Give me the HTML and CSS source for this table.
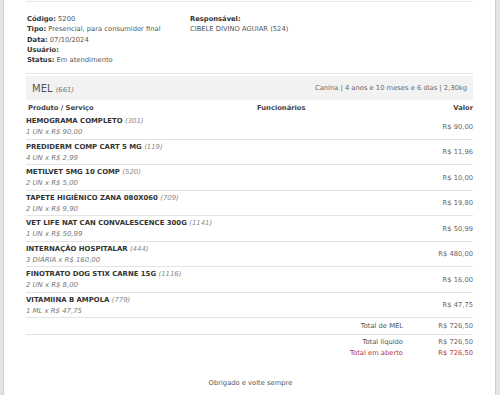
FILE: index.html
```html
<!DOCTYPE html>
<html lang="pt-BR">
<head>
<meta charset="utf-8">
<title>Atendimento 5200</title>
<link rel="stylesheet" href="styles.css">
</head>
<body>
<div class="sheet">
  <div class="content">
    <div class="topline"></div>
    <div class="info">
      <div class="info-col left">
        <div><b>Código:</b> 5200</div>
        <div><b>Tipo:</b> Presencial, para consumidor final</div>
        <div><b>Data:</b> 07/10/2024</div>
        <div><b>Usuário:</b></div>
        <div><b>Status:</b> Em atendimento</div>
      </div>
      <div class="info-col right">
        <div><b>Responsável:</b></div>
        <div>CIBELE DIVINO AGUIAR (524)</div>
      </div>
    </div>
    <div class="pet-head">
      <div class="pet-name">MEL <i class="code">(661)</i></div>
      <div class="pet-meta">Canina | 4 anos e 10 meses e 6 dias | 2,30kg</div>
    </div>
    <div class="row head">
      <div class="c-prod">Produto / Serviço</div>
      <div class="c-func">Funcionários</div>
      <div class="c-val">Valor</div>
    </div>
    <div class="items">
      <div class="row item">
        <div class="c-prod"><div class="title">HEMOGRAMA COMPLETO <i>(301)</i></div><div class="sub">1 UN x R$ 90,00</div></div>
        <div class="c-func"></div>
        <div class="c-val">R$ 90,00</div>
      </div>
      <div class="row item">
        <div class="c-prod"><div class="title">PREDIDERM COMP CART 5 MG <i>(119)</i></div><div class="sub">4 UN x R$ 2,99</div></div>
        <div class="c-func"></div>
        <div class="c-val">R$ 11,96</div>
      </div>
      <div class="row item">
        <div class="c-prod"><div class="title">METILVET 5MG 10 COMP <i>(520)</i></div><div class="sub">2 UN x R$ 5,00</div></div>
        <div class="c-func"></div>
        <div class="c-val">R$ 10,00</div>
      </div>
      <div class="row item">
        <div class="c-prod"><div class="title">TAPETE HIGIÊNICO ZANA 080X060 <i>(709)</i></div><div class="sub">2 UN x R$ 9,90</div></div>
        <div class="c-func"></div>
        <div class="c-val">R$ 19,80</div>
      </div>
      <div class="row item">
        <div class="c-prod"><div class="title">VET LIFE NAT CAN CONVALESCENCE 300G <i>(1141)</i></div><div class="sub">1 UN x R$ 50,99</div></div>
        <div class="c-func"></div>
        <div class="c-val">R$ 50,99</div>
      </div>
      <div class="row item">
        <div class="c-prod"><div class="title">INTERNAÇÃO HOSPITALAR <i>(444)</i></div><div class="sub">3 DIÁRIA x R$ 160,00</div></div>
        <div class="c-func"></div>
        <div class="c-val">R$ 480,00</div>
      </div>
      <div class="row item">
        <div class="c-prod"><div class="title">FINOTRATO DOG STIX CARNE 15G <i>(1116)</i></div><div class="sub">2 UN x R$ 8,00</div></div>
        <div class="c-func"></div>
        <div class="c-val">R$ 16,00</div>
      </div>
      <div class="row item">
        <div class="c-prod"><div class="title">VITAMIINA B AMPOLA <i>(779)</i></div><div class="sub">1 ML x R$ 47,75</div></div>
        <div class="c-func"></div>
        <div class="c-val">R$ 47,75</div>
      </div>
    </div>
    <div class="totals first">
      <div class="t-line"><span class="t-label">Total de MEL</span><span class="t-val">R$ 726,50</span></div>
    </div>
    <div class="totals">
      <div class="t-line"><span class="t-label">Total líquido</span><span class="t-val">R$ 726,50</span></div>
      <div class="t-line red"><span class="t-label">Total em aberto</span><span class="t-val">R$ 726,50</span></div>
    </div>
    <div class="footer">Obrigado e volte sempre</div>
  </div>
</div>
</body>
</html>
```
FILE: styles.css
```css
html, body {
  margin: 0;
  padding: 0;
}
body {
  background: #e4e4e4;
  font-family: "DejaVu Sans", Verdana, sans-serif;
  font-size: 6.75px;
  color: #555;
}
.sheet {
  margin-left: 3px;
  width: 491px;
  height: 395px;
  background: #fff;
  border-left: 1px solid #cfcfcf;
  border-right: 1px solid #cfcfcf;
  overflow: hidden;
}
.content {
  margin-left: 22px;
  width: 447px;
}
.topline {
  height: 1px;
  margin-top: 1px;
  background: #e8e8e8;
}
.info {
  display: flex;
  padding: 12px 0 8px 1px;
  border-bottom: 1px solid #e6e6e6;
  line-height: 10.3px;
}
.info b {
  color: #333;
  font-weight: bold;
}
.info-col.left {
  width: 163px;
}
.pet-head {
  margin-top: 2px;
  height: 24px;
  background: #f2f2f3;
  display: flex;
  align-items: center;
  justify-content: space-between;
  padding: 0 6px;
}
.pet-name {
  font-size: 10px;
  color: #555;
}
.pet-name .code {
  font-size: 6.75px;
  color: #777;
}
.pet-meta {
  color: #666;
}
.row {
  display: flex;
  align-items: center;
}
.c-prod {
  width: 231px;
}
.c-func {
  flex: 1;
}
.c-val {
  width: 80px;
  text-align: right;
  color: #666;
}
.row.head {
  height: 13px;
  margin-top: 1px;
  font-weight: bold;
  color: #444;
}
.row.head .c-prod {
  padding-left: 2px;
  width: 229px;
}
.row.head .c-val {
  color: #444;
}
.item {
  padding: 2px 0 1px;
  border-bottom: 1px solid #e4e4e4;
  line-height: 10.75px;
  font-size: 6.9px;
}
.item .title {
  font-weight: bold;
  color: #333;
  white-space: nowrap;
}
.item .title i {
  font-weight: normal;
  color: #888;
}
.item .sub {
  font-style: italic;
  color: #777;
}
.item .c-val {
  font-size: 6.75px;
}
.totals {
  display: flex;
  flex-direction: column;
  line-height: 11px;
}
.totals.first {
  padding: 3px 0 2px;
  border-bottom: 1px solid #e4e4e4;
}
.totals + .totals {
  padding-top: 2px;
}
.t-line {
  display: flex;
  justify-content: flex-end;
}
.t-label {
  text-align: right;
}
.t-val {
  width: 70px;
  text-align: right;
  color: #666;
}
.t-line.red .t-label,
.t-line.red .t-val {
  color: #b8323c;
}
.footer {
  margin-top: 20px;
  text-align: center;
  color: #555;
  padding-left: 2px;
}
```
